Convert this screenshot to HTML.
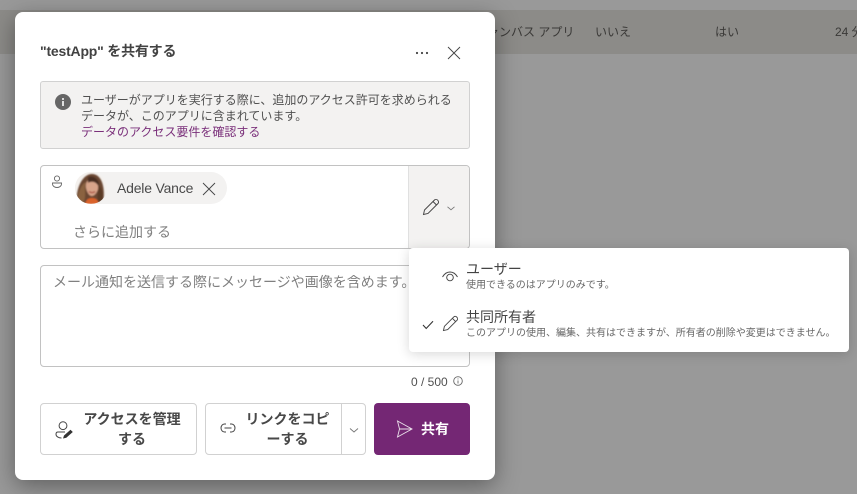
<!DOCTYPE html>
<html lang="ja">
<head>
<meta charset="utf-8">
<style>
html,body{margin:0;padding:0;width:857px;height:494px;overflow:hidden;background:#999;font-family:"Liberation Sans","Noto Sans CJK JP",sans-serif;color:#323130}
.a{position:absolute;white-space:nowrap}
svg{position:absolute;overflow:visible}
#strip{left:0;top:10px;width:857px;height:44px;background:#8c8b88}
#modal{left:15px;top:12px;width:480px;height:468px;background:#fff;border-radius:8px;box-shadow:0 6px 24px rgba(0,0,0,.38)}
#menu{left:409px;top:248px;width:440px;height:104px;background:#fff;border-radius:4px;box-shadow:0 2px 12px rgba(0,0,0,.16)}
.btn{position:absolute;box-sizing:border-box;background:#fff;border:1px solid #d1d1d1;border-radius:4px}
</style>
</head>
<body>
<div class="a" id="strip"></div>
<div class="a" style="left:487px;top:23px;font-size:12px;line-height:18px;color:#3a3937">ャンバス アプリ</div>
<div class="a" style="left:595px;top:23px;font-size:12px;line-height:18px;color:#3a3937">いいえ</div>
<div class="a" style="left:715px;top:23px;font-size:12px;line-height:18px;color:#3a3937">はい</div>
<div class="a" style="left:835px;top:23px;font-size:12px;line-height:18px;color:#3a3937">24 分</div>

<div class="a" id="modal"></div>
<div class="a" style="left:40px;top:41px;font-size:14px;line-height:20px;font-weight:700;color:#424242;letter-spacing:-.2px">"testApp" を共有する</div>
<svg style="left:0;top:0" width="857" height="494" viewBox="0 0 857 494">
  <g fill="#444"><circle cx="417" cy="53" r="1.1"/><circle cx="422" cy="53" r="1.1"/><circle cx="427" cy="53" r="1.1"/></g>
  <path d="M448 47L460 59M460 47L448 59" stroke="#444" stroke-width=".9" fill="none"/>
</svg>

<div class="a" style="left:40px;top:81px;width:430px;height:68px;box-sizing:border-box;background:#f3f2f1;border:1px solid #d1d1d1;border-radius:3px"></div>
<svg style="left:55px;top:94px" width="16" height="16" viewBox="0 0 16 16">
  <circle cx="8" cy="8" r="8" fill="#666"/>
  <rect x="7.2" y="7" width="1.6" height="5" fill="#fff"/><circle cx="8" cy="5" r="1" fill="#fff"/>
</svg>
<div class="a" style="left:81px;top:92px;font-size:12px;line-height:16px;color:#505050">ユーザーがアプリを実行する際に、追加のアクセス許可を求められる<br>データが、このアプリに含まれています。<br><span style="color:#7a2f7a">データのアクセス要件を確認する</span></div>

<div class="a" style="left:40px;top:165px;width:430px;height:84px;box-sizing:border-box;background:#fff;border:1px solid #c2c2c2;border-radius:4px"></div>
<div class="a" style="left:408px;top:166px;width:60px;height:82px;background:#f3f2f1;border-left:1px solid #e0e0e0;border-radius:0 3px 3px 0"></div>
<svg style="left:50px;top:175px" width="14" height="14" viewBox="0 0 14 14" fill="none" stroke="#666" stroke-width=".9">
  <circle cx="7" cy="3.5" r="2.6"/><path d="M2.500 8H11.500V9C11.500 11 9.500 12.500 7 12.500S2.500 11 2.500 9Z"/>
</svg>
<div class="a" style="left:75px;top:172px;width:152px;height:32px;background:#f3f2f1;border-radius:16px"></div>
<svg style="left:75px;top:172px" width="32" height="32" viewBox="0 0 32 32">
  <defs>
    <clipPath id="c"><circle cx="16" cy="16" r="16"/></clipPath>
    <filter id="b" x="-10%" y="-10%" width="120%" height="120%"><feGaussianBlur stdDeviation=".7"/></filter>
  </defs>
  <g clip-path="url(#c)">
    <rect width="32" height="32" fill="#f4f1ee"/>
    <g filter="url(#b)">
      <path d="M2 32C0 20 6 3 16 2C26 1 31 14 28 32Z" fill="#6b4630"/>
      <path d="M11 16C10 9 14 7 18 7C22 8 24 12 23 17C22 21 19 24 17 24C14 24 12 20 11 16Z" fill="#d8a48a"/>
      <path d="M13 5C18 3 25 7 24 15C22 11 18 8 13 11Z" fill="#4a2d20"/>
      <path d="M3 30C2 22 6 12 11 10C9 17 12 24 8 32Z" fill="#8a6240"/>
      <path d="M27 30C29 24 27 15 23 13C24 20 21 24 24 31Z" fill="#5a3a28"/>
      <path d="M10 32C11 28 13 26 17 26C21 26 23 28 24 32Z" fill="#d9622b"/>
      <path d="M14 19.500C16 21 18 21 20 19.500" stroke="#a8483c" stroke-width="1.200" fill="none"/>
    </g>
  </g>
</svg>
<div class="a" style="left:117px;top:178px;font-size:14px;line-height:20px;color:#4a4a4a;letter-spacing:-.2px">Adele Vance</div>
<svg style="left:203px;top:183px" width="12" height="12" viewBox="0 0 12 12"><path d="M0 0L12 12M12 0L0 12" stroke="#444" stroke-width=".9" fill="none"/></svg>
<div class="a" style="left:73px;top:222px;font-size:14px;line-height:20px;color:#808080">さらに追加する</div>
<svg style="left:423px;top:199px" width="16" height="16" viewBox="0 0 16 16" fill="none" stroke="#444" stroke-width=".95">
  <path d="M.5 15.500L1.500 11L11.500 1C12.300 .2 13.700 .2 14.700 1.200S15.800 3.700 15 4.500L5 14.500Z"/><path d="M10 2.500L13.500 6"/>
</svg>
<svg style="left:446px;top:205px" width="10" height="7" viewBox="0 0 10 7"><path d="M1.500 1.800L5 4.800L8.500 1.800" stroke="#777" stroke-width=".9" fill="none"/></svg>

<div class="a" style="left:40px;top:265px;width:430px;height:102px;box-sizing:border-box;background:#fff;border:1px solid #c2c2c2;border-radius:4px"></div>
<div class="a" style="left:53px;top:272px;font-size:14px;line-height:20px;color:#808080">メール通知を送信する際にメッセージや画像を含めます。</div>

<div class="a" id="menu"></div>
<svg style="left:441px;top:270px" width="18" height="13" viewBox="0 0 18 13" fill="none" stroke="#444" stroke-width=".95">
  <path d="M1.500 7C3.500 3.500 6 2 9 2S14.500 3.500 16.500 7"/><circle cx="9" cy="7.500" r="3.300"/>
</svg>
<div class="a" style="left:466px;top:259px;font-size:14px;line-height:20px;color:#444">ユーザー</div>
<div class="a" style="left:466px;top:279px;font-size:10px;line-height:14px;color:#666">使用できるのはアプリのみです。</div>
<svg style="left:422px;top:320px" width="12" height="10" viewBox="0 0 12 10"><path d="M1 5L4.200 8.500L11 1.200" stroke="#333" stroke-width="1.100" fill="none"/></svg>
<svg style="left:443px;top:316px" width="15" height="15" viewBox="0 0 16 16" fill="none" stroke="#444" stroke-width="1">
  <path d="M.5 15.500L1.500 11L11.500 1C12.300 .2 13.700 .2 14.700 1.200S15.800 3.700 15 4.500L5 14.500Z"/><path d="M10 2.500L13.500 6"/>
</svg>
<div class="a" style="left:466px;top:307px;font-size:14px;line-height:20px;color:#444">共同所有者</div>
<div class="a" style="left:466px;top:327px;font-size:10px;line-height:14px;color:#666">このアプリの使用、編集、共有はできますが、所有者の削除や変更はできません。</div>

<div class="a" style="left:411px;top:374px;font-size:12px;line-height:16px;color:#505050">0 / 500</div>
<svg style="left:453px;top:376px" width="10" height="10" viewBox="0 0 10 10" fill="none" stroke="#666" stroke-width=".9">
  <circle cx="5" cy="5" r="4.300"/><path d="M5 4.500V7.500M5 2.500V3.400"/>
</svg>

<div class="btn" style="left:40px;top:403px;width:157px;height:52px"></div>
<svg style="left:55px;top:421px" width="19" height="19" viewBox="0 0 19 19">
  <circle cx="8" cy="4.700" r="3.900" fill="none" stroke="#444" stroke-width="1"/>
  <path d="M10 11H3C1.700 11 1 12 1 13.200C1 15.500 3.500 17 6.500 17" fill="none" stroke="#444" stroke-width="1"/>
  <path d="M8 17.500L9 14.500L15.500 8.800L17.800 11L11.300 16.800Z" fill="#333"/>
</svg>
<div class="a" style="left:80px;top:409px;width:104px;font-size:14px;line-height:20px;font-weight:700;color:#484848;text-align:center">アクセスを管理<br>する</div>

<div class="btn" style="left:205px;top:403px;width:161px;height:52px"></div>
<div class="a" style="left:341px;top:404px;width:1px;height:50px;background:#d1d1d1"></div>
<svg style="left:220px;top:423px" width="16" height="10" viewBox="0 0 16 10" fill="none" stroke="#444" stroke-width="1">
  <path d="M6 1H4.500C2.500 1 1 2.800 1 5S2.500 9 4.500 9H6M10 1H11.500C13.500 1 15 2.800 15 5S13.500 9 11.500 9H10M4.500 5H11.500"/>
</svg>
<div class="a" style="left:240px;top:409px;width:95px;font-size:14px;line-height:20px;font-weight:700;color:#484848;text-align:center">リンクをコピ<br>ーする</div>
<svg style="left:349px;top:427px" width="10" height="7" viewBox="0 0 10 7"><path d="M1 1.500L5 5L9 1.500" stroke="#777" stroke-width=".9" fill="none"/></svg>

<div class="a" style="left:374px;top:403px;width:96px;height:52px;background:#742774;border-radius:4px"></div>
<svg style="left:396px;top:420px" width="17" height="18" viewBox="0 0 17 18" fill="none" stroke="#eadfea" stroke-width=".9">
  <path d="M1.500 1L16 9L1.500 17L3.500 9ZM3.500 9H16"/>
</svg>
<div class="a" style="left:421px;top:419px;font-size:14px;line-height:20px;font-weight:700;color:#fff">共有</div>
</body>
</html>
